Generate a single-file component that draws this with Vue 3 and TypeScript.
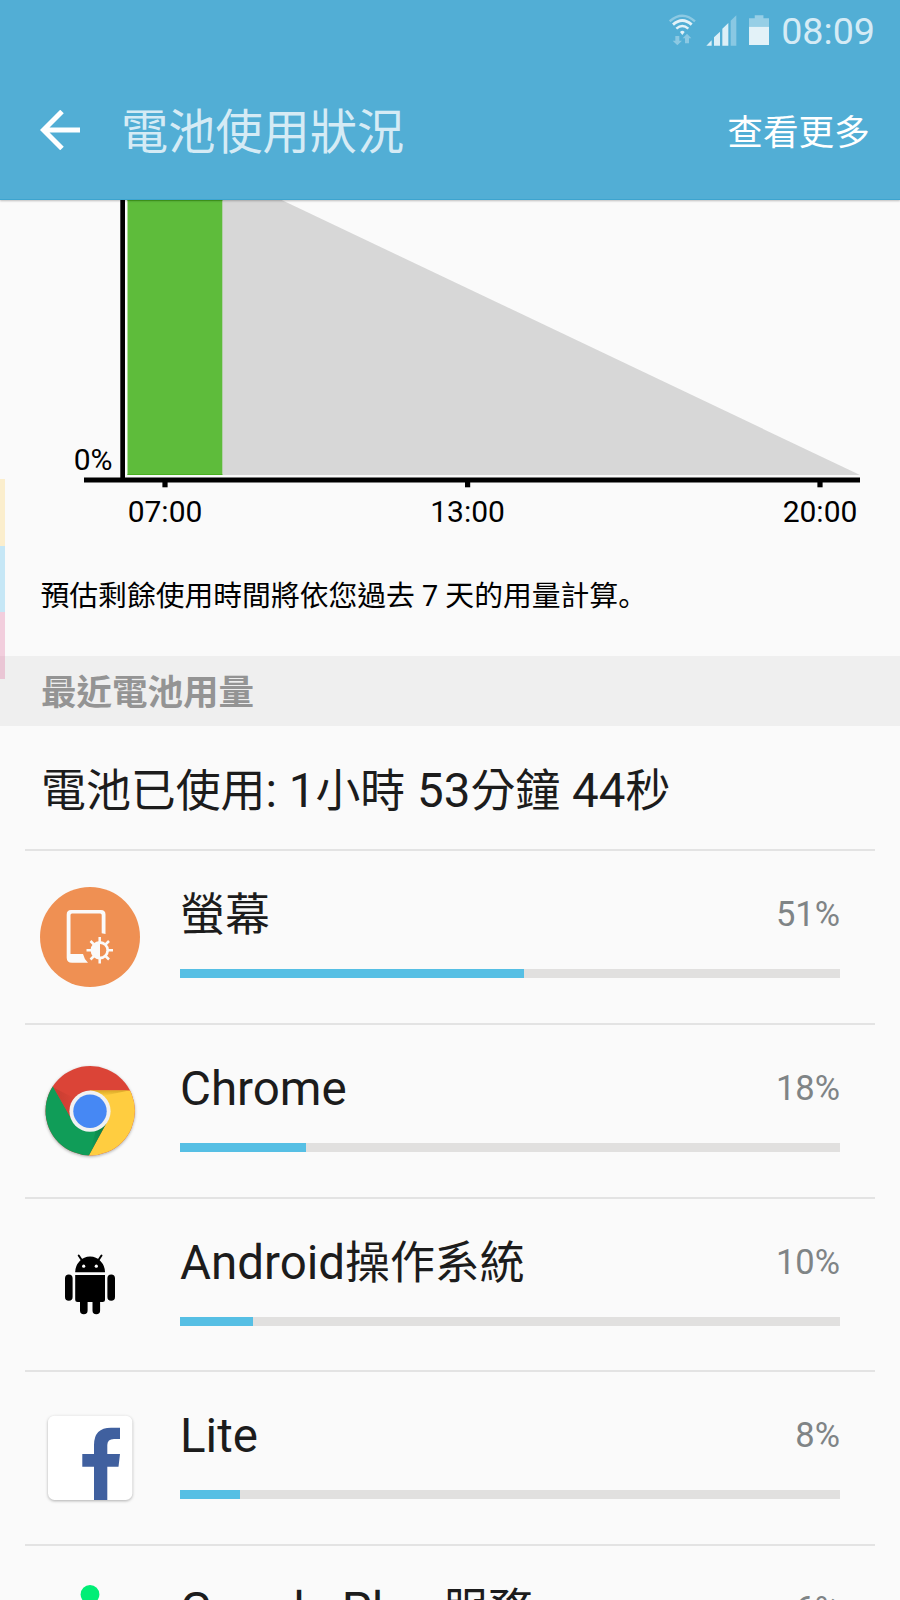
<script setup lang="ts">
type IconName = 'screen' | 'chrome' | 'android' | 'lite' | 'play'

interface UsageItem {
  name: string
  percent: number
  bar: number
  icon: IconName
}

const items: UsageItem[] = [
  { name: '螢幕', percent: 51, bar: 52.1, icon: 'screen' },
  { name: 'Chrome', percent: 18, bar: 19.05, icon: 'chrome' },
  { name: 'Android操作系統', percent: 10, bar: 11.05, icon: 'android' },
  { name: 'Lite', percent: 8, bar: 9.1, icon: 'lite' },
  { name: 'Google Play 服務', percent: 6, bar: 7, icon: 'play' },
]

const total = '電池已使用: 1小時 53分鐘 44秒'

const ticks = [
  { label: '07:00', x: 165 },
  { label: '13:00', x: 467.6 },
  { label: '20:00', x: 820 },
]

// Latin runs are set slightly larger than the Chinese text around them.
function runs(text: string): { text: string; latin: boolean }[] {
  return (text.match(/[\x20-\x7e]+|[^\x20-\x7e]+/g) ?? []).map((part) => ({
    text: part,
    latin: /^[\x20-\x7e]/.test(part),
  }))
}
</script>

<template>
  <div class="screen" lang="zh-Hant">
    <header class="header">
      <div class="status">
        <svg class="wifi" viewBox="57 42 81 96">
          <g fill="none" stroke="#e3f2f8">
            <path d="M59 64Q97 30 135 64" stroke-width="7" opacity=".4" />
            <path d="M69 74Q97 49 125 74" stroke-width="8.500" />
            <path d="M79 86Q97 70 115 86" stroke-width="7.500" />
          </g>
          <path d="M90 96q7-7 14 0l-7 9z" fill="#e3f2f8" />
          <path d="M76 108h12v14h8l-14 14-14-14h8zM105 130h12v-15h7l-13-14-13 14h7z" fill="#e3f2f8" opacity=".4" />
        </svg>
        <svg class="signal" viewBox="167 43 93 93">
          <path d="M168 135l16-16v16zM191 110l18-17v42h-18zM216 84l18-17v68h-18z" fill="#dceff7" />
          <path d="M241 60l17-16v91h-17z" fill="#dceff7" opacity=".4" />
        </svg>
        <svg class="battery" viewBox="296 44 61 91">
          <path d="M296 54h17v-9h26v9h18v25h-61z" fill="#dceff7" opacity=".5" />
          <path d="M296 79h61v56h-61z" fill="#e3f2f8" />
        </svg>
        <span class="clock">08:09</span>
      </div>
      <div class="toolbar">
        <svg class="back" viewBox="0 0 40 40">
          <path d="M40 20H3.500M22 1.500L3.500 20l18.500 18.500" fill="none" stroke="#fff" stroke-width="5" />
        </svg>
        <h1 class="title">電池使用狀況</h1>
        <span class="more">查看更多</span>
      </div>
    </header>

    <section class="chart">
      <svg viewBox="0 200 900 340" width="900" height="340">
        <path d="M222 200H281.700L860 475H222z" fill="#d7d7d7" />
        <path d="M127.500 200H222.300V475H127.500z" fill="#5ebc3b" />
        <path d="M127.500 200.500H222.300M127.500 474.500H222.300" stroke="#49ae20" />
        <path d="M120.300 200H125V478H120.300zM84 477.500H860V482.500H84z" />
        <g v-for="t in ticks" :key="t.label">
          <rect :x="t.x - 2.600" y="482" width="5.200" height="5.300" />
          <text :x="t.x" y="522.200" text-anchor="middle">{{ t.label }}</text>
        </g>
        <text x="112.500" y="470" text-anchor="end">0%</text>
      </svg>
      <p class="note">預估剩餘使用時間將依您過去 7 天的用量計算<span class="stop" lang="zh-Hans">。</span></p>
    </section>

    <h2 class="section">最近電池用量</h2>
    <p class="total"><span v-for="(r, i) in runs(total)" :key="i" :class="{ latin: r.latin }">{{ r.text }}</span></p>

    <ul class="list">
      <li v-for="item in items" :key="item.name" class="row">
        <svg class="icon" viewBox="0 0 100 100">
          <g v-if="item.icon === 'screen'">
            <circle cx="50" cy="50" r="50" fill="#ef9053" />
            <path fill-rule="evenodd" d="M31 23H61q4.500 0 4.500 4.500V47l-3.800-.8V28q0-1.500-1.500-1.500H32q-1.500 0-1.500 1.500V67H43q1 4.800 5 8.700H32q-5.300 0-5.300-5V27.500q0-4.500 4.300-4.500z" fill="#fafafa" />
            <g stroke="#fafafa" stroke-width="2.500">
              <path d="M59.700 50V76.500M46.500 63.300H73M50.500 54L69 72.500M69 54L50.500 72.500" />
            </g>
            <circle cx="59.800" cy="63.300" r="9.200" fill="#fafafa" />
            <path d="M60 57a6.300 6.300 0 0 1 0 12.600z" fill="#ef9053" />
          </g>
          <g v-else-if="item.icon === 'chrome'" class="disc">
            <defs>
              <clipPath id="disc"><circle cx="50.200" cy="49.800" r="44.700" /></clipPath>
              <linearGradient id="redShade" x1="0" y1="0.500" x2="1" y2="0.300">
                <stop offset="0" stop-color="#b8382c" /><stop offset="1" stop-color="#db4437" />
              </linearGradient>
              <linearGradient id="yellowShade" x1="0" y1="0" x2="0" y2="1">
                <stop offset="0" stop-color="#dba928" /><stop offset="1" stop-color="#ffcd40" />
              </linearGradient>
              <linearGradient id="greenShade" x1="1" y1="0" x2="0" y2=".5">
                <stop offset="0" stop-color="#0b7b43" /><stop offset="1" stop-color="#109d58" />
              </linearGradient>
            </defs>
            <g clip-path="url(#disc)">
              <path d="M0 0H100V100H0z" fill="#db4437" />
              <path d="M0 5L13.500 26.500L32.500 60L65 64L48 96L40 105L0 100z" fill="#109d58" />
              <path d="M50 29.600H100V100H46L67.500 60z" fill="#ffcd40" />
              <path d="M13.500 26.500L36 38L31 57z" fill="url(#redShade)" opacity=".6" />
              <path d="M50 29.600H89L63 35z" fill="url(#yellowShade)" />
              <path d="M66.500 62L48.500 95L56 69z" fill="url(#greenShade)" />
            </g>
            <circle cx="50" cy="50.200" r="20.600" fill="#f1f1f1" />
            <circle cx="50" cy="50.200" r="16.700" fill="#4688f4" />
          </g>
          <g v-else-if="item.icon === 'android'">
            <path d="M35.200 37.200a14.900 15.600 0 0 1 29.800 0zM35.200 40H65V64.500q0 2.500-2.500 2.500H37.700q-2.500 0-2.500-2.500z" />
            <path d="M28.800 43.300V62M71.200 43.300V62M43.800 64V75.500M56.300 64V75.500" stroke="#000" stroke-width="7.600" stroke-linecap="round" />
            <path d="M38.700 20.500l4 6M61.500 20.500l-4 6" stroke="#000" stroke-width="2" stroke-linecap="round" />
            <circle cx="43.700" cy="31.200" r="1.600" fill="#fff" /><circle cx="56.300" cy="31.200" r="1.600" fill="#fff" />
          </g>
          <g v-else-if="item.icon === 'lite'">
            <rect class="tile" x="8" y="7.700" width="84.300" height="84.300" rx="6.500" fill="#fff" />
            <path d="M54 92V58.700H42.300V46H54V37Q54 19.700 71 19.700H80V31H74Q67.300 31 67.300 37V46H80L78.500 58.700H67.300V92z" fill="#40609f" />
          </g>
          <g v-else>
            <circle cx="50" cy="12.500" r="9.400" fill="#00ee76" />
          </g>
        </svg>
        <div class="body">
          <div class="line">
            <span class="name"><span v-for="(r, i) in runs(item.name)" :key="i" :class="{ latin: r.latin }">{{ r.text }}</span></span>
            <span class="percent">{{ item.percent }}%</span>
          </div>
          <div class="track"><div class="fill" :style="{ width: item.bar + '%' }"></div></div>
        </div>
      </li>
    </ul>

    <div class="edge"><i class="yellow"></i><i class="blue"></i><i class="pink"></i></div>
  </div>
</template>

<style>
body {
  background: #fafafa;
  overflow: hidden;
}
</style>

<style scoped>
.screen {
  position: relative;
  width: 900px;
  height: 1600px;
  overflow: hidden;
  background: #fafafa;
  font-family: Roboto, "Noto Sans CJK TC", sans-serif;
  color: #1c1c1c;
}
h1, h2, p, ul {
  margin: 0;
  padding: 0;
  font-weight: 400;
}
.header {
  position: relative;
  height: 200px;
  box-sizing: border-box;
  background: #52aed5;
  border-bottom: 1px solid #3da4cf;
  box-shadow: 0 1px 2px rgba(0, 0, 0, .25);
}
.status {
  display: flex;
  height: 60px;
  align-items: center;
  justify-content: flex-end;
  padding-right: 25px;
}
.wifi { width: 27px; height: 32px; margin-right: 9.500px; }
.signal { width: 31px; height: 31px; margin-right: 12px; }
.battery { width: 20.500px; height: 30.500px; margin-right: 12px; }
.clock {
  color: #d5ebf5;
  font-size: 37.700px;
  line-height: 60px;
  padding-top: 1px;
}
.toolbar {
  display: flex;
  align-items: center;
  height: 140px;
  padding: 0 30px 0 40px;
}
.back { width: 40px; height: 40px; }
.title {
  margin-left: 41px;
  padding-top: 5px;
  font-size: 47.200px;
  line-height: 70px;
  color: #d5ebf5;
}
.more {
  margin-left: auto;
  padding-bottom: 2px;
  color: #fff;
  font-size: 35.700px;
}
.chart {
  height: 456px;
}
.chart svg { display: block; }
.chart text {
  font-size: 30px;
  fill: #000;
}
.note {
  padding-left: 40.500px;
  font-size: 28.800px;
  line-height: 40px;
  margin-top: 36px;
  color: #000;
}
.stop { font-family: "Noto Sans CJK SC", sans-serif; line-height: 1; }
.section {
  height: 70px;
  padding-left: 41px;
  background: #efefef;
  color: #949494;
  font-size: 35.500px;
  line-height: 75px;
  font-weight: 700;
}
.total {
  height: 123px;
  padding-left: 41px;
  font-size: 44.900px;
  line-height: 131px;
}
.latin {
  font-size: 47.500px;
  line-height: 1;
  white-space: pre;
}
.list {
  margin: 0 25px;
  border-top: 2px solid #e3e3e3;
  list-style: none;
}
.row {
  display: flex;
  box-sizing: border-box;
  height: 173.750px;
  padding: 36px 35px 0 15px;
  border-bottom: 2px solid #e3e3e3;
}
.icon {
  flex: none;
  width: 100px;
  height: 100px;
  overflow: visible;
}
.tile, .disc { filter: drop-shadow(0 1.500px 1.500px rgba(0, 0, 0, .3)); }
.body {
  flex: 1;
  margin-left: 40px;
}
.line {
  display: flex;
  justify-content: space-between;
  height: 82px;
}
.name {
  font-size: 44.900px;
  line-height: 58px;
  white-space: nowrap;
}
.percent {
  color: #7f8486;
  font-size: 34.500px;
  line-height: 54px;
}
.track {
  height: 9px;
  background: #e1e0df;
}
.fill {
  height: 100%;
  background: #56bfe4;
}
.edge {
  position: absolute;
  left: 0;
  top: 479px;
  width: 5px;
}
.edge i {
  display: block;
  height: 66.600px;
}
.yellow { background: rgba(255, 210, 90, .28); }
.blue { background: rgba(80, 190, 240, .3); }
.pink { background: rgba(220, 80, 140, .26); }
</style>
